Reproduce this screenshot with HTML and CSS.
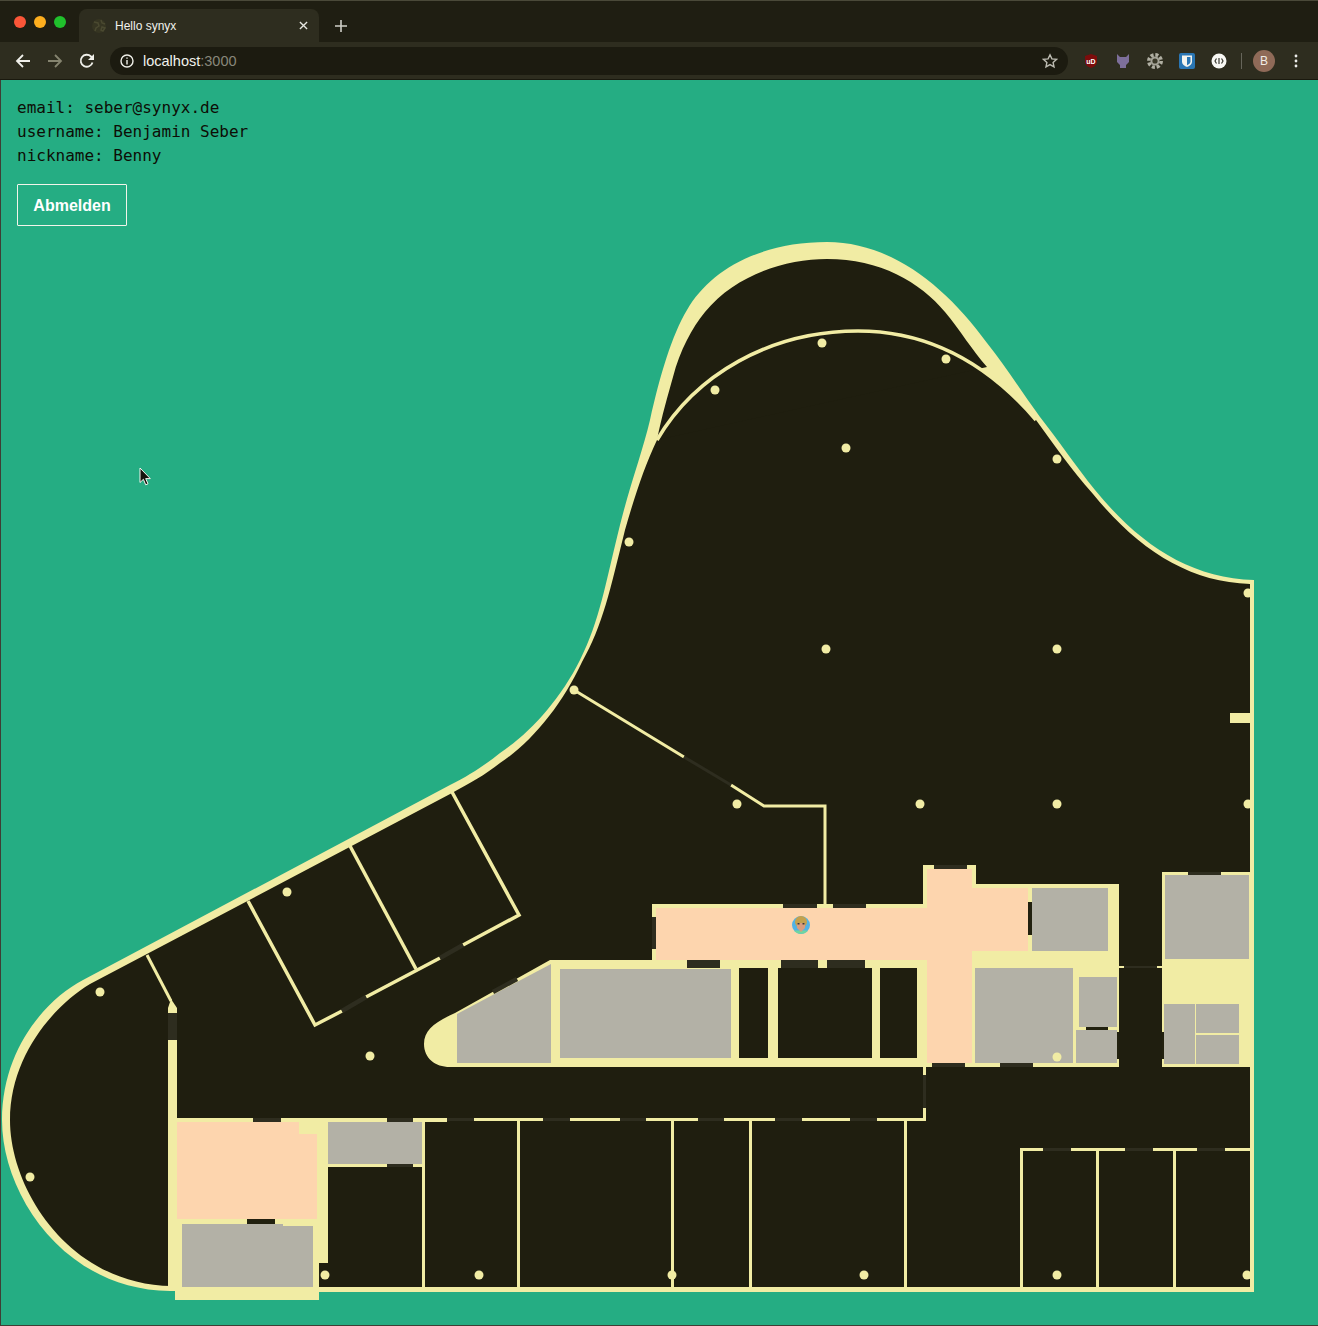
FILE: index.html
```html
<!DOCTYPE html>
<html lang="de">
<head>
<meta charset="utf-8">
<title>Hello synyx</title>
<link rel="stylesheet" href="styles.css">
</head>
<body>
<header class="chrome">
  <div class="tabstrip">
    <div class="lights"><span class="light red"></span><span class="light amber"></span><span class="light green"></span></div>
    <div class="tab">
      <svg class="favicon" viewBox="0 0 16 16"><circle cx="8" cy="8" r="7" class="fav-a"/><path d="M3 4l4 1 1 3-3 2-1 3M10 2l1 3 3 1M11 9l3 1-2 3-2-1z" class="fav-b"/></svg>
      <span class="tab-title">Hello synyx</span>
      <svg class="tab-x" viewBox="0 0 10 10"><path d="M1 1l8 8M9 1l-8 8"/></svg>
    </div>
    <svg class="tab-new" viewBox="0 0 12 12"><path d="M6 0v12M0 6h12"/></svg>
  </div>
  <div class="toolbar">
    <svg class="nav" viewBox="0 0 16 16"><path d="M15 8H2M8 2L2 8l6 6"/></svg>
    <svg class="nav dim" viewBox="0 0 16 16"><path d="M1 8h13M8 2l6 6-6 6"/></svg>
    <svg class="nav" viewBox="0 0 16 16"><path d="M13.500 9.500A6 6 0 1 1 12 3.500L14 5.500"/><path class="solid" d="M15 1v6H9z"/></svg>
    <div class="omnibox">
      <svg class="info" viewBox="0 0 14 14"><circle cx="7" cy="7" r="6"/><path d="M7 6v4.400M7 3.400v1.400"/></svg>
      <span class="host">localhost<span class="port">:3000</span></span>
      <svg class="star" viewBox="0 0 16 16"><path d="M8 1.800l1.900 4.100 4.500.5-3.300 3 .9 4.400L8 11.600l-4 2.200.9-4.400-3.300-3 4.500-.5z"/></svg>
    </div>
    <div class="extensions">
      <svg class="ext" viewBox="0 0 16 16"><path class="ub" d="M8 1l6 2v5c0 4-3 6-6 7-3-1-6-3-6-7V3z"/><text x="8" y="10.500" class="ub-t">uD</text></svg>
      <svg class="ext" viewBox="0 0 16 16"><path class="cat" d="M2 1l3 3h6l3-3v8l-3 3v3H5v-3L2 9z"/></svg>
      <svg class="ext" viewBox="0 0 16 16"><circle cx="8" cy="8" r="6.200" class="gear-o"/><circle cx="8" cy="8" r="3.600" class="gear-i"/></svg>
      <svg class="ext" viewBox="0 0 16 16"><rect width="16" height="16" rx="2" class="bw-bg"/><path class="bw" d="M3 2.500h10v6c0 3-2.500 4.500-5 5.500-2.500-1-5-2.500-5-5.500z"/><path class="bw-i" d="M8 4h3.500v4.500c0 1.700-1.700 2.800-3.500 3.700z"/></svg>
      <svg class="ext" viewBox="0 0 16 16"><circle cx="8" cy="8" r="7.500" class="wh"/><path class="wh-i" d="M5.500 5.500L4 8l1.500 2.500M10.500 5.500L12 8l-1.500 2.500M8 5v6"/></svg>
    </div>
    <span class="sep"></span>
    <span class="profile-pic">B</span>
    <svg class="menu" viewBox="0 0 4 14"><circle cx="2" cy="2" r="1.400"/><circle cx="2" cy="7" r="1.400"/><circle cx="2" cy="12" r="1.400"/></svg>
  </div>
</header>
<main class="page">
  <section class="profile">
    <p class="line">email: seber@synyx.de</p>
    <p class="line">username: Benjamin Seber</p>
    <p class="line">nickname: Benny</p>
    <button class="logout" type="button">Abmelden</button>
  </section>
  <svg class="plan" viewBox="0 242 1318 1084" width="1318" height="1084">
    <!-- silhouette -->
    <path class="wall" d="M1254 1292L1254 580C1190 578 1140 545 1095 490C1075 465 1058 440 1040 417C1020 390 1005 365 987 343C945 285 890 242 827 242C760 242 710 270 687 310C672 335 660 375 650 420C643 450 630 485 620 525C605 585 600 620 580 660C560 700 530 733 500 753C485 765 470 775 450 785L83 980C45 1000 2 1050 2 1120C2 1195 65 1290 170 1291L175 1291V1300H319V1292Z"/>
    <!-- interior -->
    <path class="dark" d="M1250 1287L1250 584C1188 582 1138 549 1093 494C1071 469 1054 445 1036 420C988 364 930 331 858 331C770 331 695 375 657 440C645 465 635 495 625 530C610 590 603 625 582 662C562 705 532 742 500 763C485 775 470 783 452 793L90 984C55 1005 10 1055 10 1120C10 1190 70 1285 172 1286L172 1287Z"/>
    <path class="dark" d="M657 440C662 415 668 395 673 377C680 350 692 328 705 312C735 275 785 259 827 259C880 259 920 282 945 312C960 330 972 350 987 367Z"/>
    <path class="line-thick" d="M657 440C695 375 770 331 858 331C930 331 988 364 1036 420"/>

    <!-- columns -->
    <g class="dots">
      <circle cx="822" cy="343" r="4.500"/><circle cx="946" cy="359" r="4.500"/><circle cx="715" cy="390" r="4.500"/>
      <circle cx="846" cy="448" r="4.500"/><circle cx="1057" cy="459" r="4.500"/><circle cx="629" cy="542" r="4.500"/>
      <circle cx="1248" cy="593" r="4.500"/><circle cx="826" cy="649" r="4.500"/><circle cx="1057" cy="649" r="4.500"/>
      <circle cx="574" cy="690" r="4.500"/><circle cx="737" cy="804" r="4.500"/><circle cx="920" cy="804" r="4.500"/>
      <circle cx="1057" cy="804" r="4.500"/><circle cx="1248" cy="804" r="4.500"/><circle cx="287" cy="892" r="4.500"/>
      <circle cx="100" cy="992" r="4.500"/><circle cx="370" cy="1056" r="4.500"/><circle cx="30" cy="1177" r="4.500"/>
      <circle cx="325" cy="1275" r="4.500"/><circle cx="479" cy="1275" r="4.500"/><circle cx="672" cy="1275" r="4.500"/>
      <circle cx="864" cy="1275" r="4.500"/><circle cx="1057" cy="1275" r="4.500"/><circle cx="1247" cy="1275" r="4.500"/>
    </g>

    <!-- thin partition from the facade -->
    <path class="line-thin" d="M574 690L684 757M731 785L764 806H825V905"/>
    <path class="door-line" d="M684 757L731 785"/>
    <rect class="wall" x="1230" y="713" width="21" height="10"/>

    <!-- tilted rooms -->
    <path class="line-thick" d="M452 792L519 915L463 945M440 958L366 997M342 1011L315 1025L248 901"/>
    <path class="line-thick" d="M350 846L416 969"/>
    <path class="door-line wide" d="M463 945L440 958M366 997L342 1011"/>

    <!-- left stair wall -->
    <path class="line-thin" d="M147 955L171 1001"/>
    <path class="wall" d="M168 1008L171 999L177 1008V1290H168Z"/>
    <rect class="door" x="168" y="1013" width="9" height="27"/>

    <!-- lower-left core -->
    <rect class="wall" x="177" y="1118" width="151" height="145"/>
    <rect class="wall" x="177" y="1263" width="142" height="27"/>
    <rect class="peach" x="177" y="1122" width="140" height="97"/>
    <rect class="wall" x="299" y="1122" width="18" height="12"/>
    <path class="gray" d="M182 1224H283V1226H313V1287H182Z"/>
    <rect class="wall" x="328" y="1118" width="119" height="4"/>
    <rect class="gray" x="328" y="1122" width="94" height="42"/>
    <rect class="wall" x="328" y="1164" width="96" height="3"/>
    <rect class="door" x="253" y="1118" width="28" height="4"/>
    <rect class="door" x="387" y="1118" width="26" height="4"/>
    <rect class="door" x="387" y="1164" width="26" height="3"/>
    <rect class="door-dark" x="247" y="1219" width="28" height="5"/>

    <!-- south row -->
    <g class="wall">
      <rect x="474" y="1118" width="69" height="3"/><rect x="570" y="1118" width="50" height="3"/>
      <rect x="646" y="1118" width="52" height="3"/><rect x="724" y="1118" width="51" height="3"/>
      <rect x="802" y="1118" width="48" height="3"/><rect x="877" y="1118" width="49" height="3"/>
      <rect x="422" y="1122" width="3" height="165"/><rect x="517" y="1120" width="3" height="167"/>
      <rect x="671" y="1120" width="3" height="167"/><rect x="749" y="1120" width="3" height="167"/>
      <rect x="904" y="1120" width="3" height="167"/>
      <rect x="923" y="1108" width="3" height="12"/><rect x="923" y="1066" width="3" height="9"/>
    </g>
    <g class="door">
      <rect x="447" y="1118" width="27" height="3"/><rect x="543" y="1118" width="27" height="3"/>
      <rect x="620" y="1118" width="26" height="3"/><rect x="698" y="1118" width="26" height="3"/>
      <rect x="775" y="1118" width="27" height="3"/><rect x="850" y="1118" width="27" height="3"/>
      <rect x="923" y="1075" width="3" height="33"/>
    </g>

    <!-- south-east rooms -->
    <g class="wall">
      <rect x="1020" y="1148" width="23" height="3"/><rect x="1071" y="1148" width="54" height="3"/>
      <rect x="1153" y="1148" width="44" height="3"/><rect x="1225" y="1148" width="25" height="3"/>
      <rect x="1020" y="1148" width="3" height="139"/><rect x="1096" y="1150" width="3" height="137"/>
      <rect x="1173" y="1150" width="3" height="137"/>
    </g>
    <g class="door">
      <rect x="1043" y="1148" width="28" height="3"/><rect x="1125" y="1148" width="28" height="3"/>
      <rect x="1197" y="1148" width="28" height="3"/>
    </g>

    <!-- central wing -->
    <path class="wall" d="M550 960L455 1013C435 1022 424 1030 424 1044C424 1058 435 1067 450 1067H927V960Z"/>
    <path class="gray" d="M457 1014L551 964V1063H457Z"/>
    <path class="door-line wide" d="M493 992L517 979"/>
    <rect class="gray" x="560" y="969" width="171" height="89"/>
    <rect class="dark" x="739" y="968" width="29" height="90"/>
    <rect class="dark" x="778" y="968" width="94" height="90"/>
    <rect class="dark" x="880" y="968" width="37" height="90"/>
    <rect class="door" x="687" y="960" width="33" height="8"/>
    <rect class="door" x="781" y="960" width="37" height="8"/>
    <rect class="door" x="827" y="960" width="38" height="8"/>

    <!-- corridor and tower -->
    <rect class="wall" x="652" y="904" width="275" height="56"/>
    <rect class="peach" x="656" y="908" width="271" height="52"/>
    <rect class="door" x="652" y="917" width="4" height="32"/>
    <rect class="door" x="783" y="904" width="34" height="4"/>
    <rect class="door" x="833" y="904" width="33" height="4"/>
    <rect class="wall" x="923" y="865" width="53" height="40"/>
    <rect class="wall" x="972" y="884" width="147" height="183"/>
    <rect class="peach" x="927" y="869" width="45" height="40"/>
    <rect class="peach" x="927" y="888" width="101" height="63"/>
    <rect class="peach" x="927" y="951" width="45" height="112"/>
    <rect class="wall" x="925" y="1063" width="47" height="4"/>
    <rect class="door" x="934" y="865" width="33" height="4"/>
    <rect class="door" x="932" y="1063" width="33" height="4"/>

    <!-- east rooms -->
    <rect class="gray" x="1032" y="888" width="76" height="63"/>
    <rect class="door-dark" x="1028" y="902" width="4" height="33"/>
    <rect class="gray" x="975" y="968" width="98" height="95"/>
    <rect class="gray" x="1079" y="977" width="38" height="50"/>
    <rect class="gray" x="1076" y="1030" width="41" height="33"/>
    <rect class="door-dark" x="1086" y="1027" width="22" height="3"/>
    <rect class="door-dark" x="1117" y="1032" width="2" height="27"/>
    <rect class="door" x="1000" y="1063" width="33" height="4"/>
    <circle class="wall" cx="1057" cy="1057" r="4.500"/>
    <rect class="wall" x="1119" y="966" width="5" height="2"/>
    <rect class="door" x="1124" y="966" width="33" height="2"/>
    <rect class="wall" x="1157" y="966" width="5" height="2"/>

    <!-- north-east block -->
    <rect class="wall" x="1162" y="872" width="88" height="195"/>
    <rect class="door" x="1188" y="872" width="33" height="3"/>
    <rect class="gray" x="1165" y="875" width="84" height="84"/>
    <rect class="gray" x="1164" y="1004" width="31" height="60"/>
    <rect class="gray" x="1196" y="1004" width="43" height="29"/>
    <rect class="gray" x="1196" y="1035" width="43" height="29"/>
    <rect class="door-dark" x="1162" y="1032" width="2" height="27"/>

    <!-- avatar -->
    <circle class="av-blue" cx="801" cy="925" r="9"/>
    <path class="av-green" d="M794 930.500A9 9 0 0 0 808 930.500Z"/>
    <circle class="av-hair" cx="801" cy="922" r="6"/>
    <path class="av-skin" d="M797 923H805V928L801 932L797 928Z"/>
    <rect class="av-eye" x="797.500" y="923" width="2" height="1.500"/>
    <rect class="av-eye" x="802.500" y="923" width="2" height="1.500"/>
  </svg>
</main>
<svg class="cursor" viewBox="0 0 12 19"><path d="M1 1v14.500l3.400-3.200 2.300 5.500 2.300-1-2.300-5.200h4.600z"/></svg>
</body>
</html>
```

FILE: styles.css
```css
* { box-sizing: border-box; }
html, body { margin: 0; padding: 0; }
body {
  position: relative;
  width: 1318px;
  height: 1326px;
  overflow: hidden;
  font-family: "Liberation Sans", Arial, sans-serif;
  background: #25ad83;
}

/* browser chrome */
.chrome { height: 80px; display: flex; flex-direction: column; border-top: 1px solid #4a4939; }
.tabstrip { height: 41px; background: #1f1e12; display: flex; align-items: flex-end; padding-left: 14px; }
.lights { display: flex; gap: 8px; align-self: flex-start; padding-top: 15px; width: 65px; }
.light { width: 12px; height: 12px; border-radius: 50%; }
.red { background: #fb5638; }
.amber { background: #fdae1e; }
.green { background: #20c02c; }
.tab {
  width: 240px; height: 33px; background: #2e2d1f; border-radius: 8px 8px 0 0;
  display: flex; align-items: center; padding: 0 11px 0 12px;
}
.favicon { width: 16px; height: 16px; margin-right: 8px; }
.fav-a { fill: #363522; }
.fav-b { fill: none; stroke: #4a4930; stroke-width: 1.500; }
.tab-title { flex: 1; color: #f1f1ec; font-size: 12px; }
.tab-x { width: 9px; height: 9px; fill: none; stroke: #e6e6e0; stroke-width: 1.500; }
.tab-new { width: 12px; height: 12px; margin: 0 0 10px 16px; fill: none; stroke: #cfcfc8; stroke-width: 1.600; }
.toolbar { height: 38px; background: #2e2d1f; display: flex; align-items: center; padding: 0 14px 0 15px; border-bottom: 1px solid #1a190e; }
.nav { width: 16px; height: 16px; margin-right: 16px; fill: none; stroke: #f0f0ea; stroke-width: 1.800; }
.nav.dim { stroke: #85846f; }
.nav .solid { fill: #f0f0ea; stroke: none; }
.omnibox {
  width: 958px; height: 28px; margin-left: -1px; background: #1c1b10; border-radius: 14px;
  display: flex; align-items: center; padding: 0 10px;
}
.info { width: 14px; height: 14px; fill: none; stroke: #efefe8; stroke-width: 1.400; margin-right: 9px; }
.host { flex: 1; color: #f1f1ec; font-size: 14.500px; }
.port { color: #88877a; }
.star { width: 16px; height: 16px; fill: none; stroke: #bdbcb2; stroke-width: 1.400; }
.extensions { display: flex; gap: 16px; margin-left: 15px; }
.ext { width: 16px; height: 16px; }
.ub { fill: #7c0c0c; }
.ub-t { fill: #fff; font-size: 7px; font-weight: 700; text-anchor: middle; font-family: "Liberation Sans", sans-serif; }
.cat { fill: #7d6f9a; }
.gear-o { fill: none; stroke: #b0afa2; stroke-width: 3.500; stroke-dasharray: 3 1.800; }
.gear-i { fill: #3a3928; stroke: #a5a498; stroke-width: 2; }
.bw-bg { fill: #2a76b4; }
.bw { fill: #f4f4ee; }
.bw-i { fill: #2a76b4; }
.wh { fill: #f8f8f4; }
.wh-i { fill: none; stroke: #3a3a32; stroke-width: 1.200; }
.sep { width: 1px; height: 16px; background: #66655a; margin-left: 14px; }
.profile-pic {
  width: 22px; height: 22px; border-radius: 50%; background: #8f6a58; color: #f1ece6;
  font-size: 12px; display: flex; align-items: center; justify-content: center; margin-left: 11px;
}
.menu { width: 4px; height: 14px; margin-left: 19px; fill: #ececea; }

/* page */
.page { background: #25ad83; box-shadow: inset 1px 0 #3f3e34, inset 0 -1px #3f3e34; height: 1246px; }
.profile { padding: 16px 17px; }
.line { margin: 0; font: 16px/24px "DejaVu Sans Mono", monospace; color: #0d0d06; }
.logout {
  display: block; width: 110px; height: 42px; margin-top: 16px; padding: 2px 0 0;
  border: 1px solid #f2f4ea; border-radius: 1px; background: transparent;
  color: #fff; font: 700 16px "Liberation Sans", Arial, sans-serif;
}

/* floor plan */
.plan { display: block; }
.wall, .dots { fill: #f1eca4; }
.dark { fill: #1f1e0f; }
.peach { fill: #fdd5ae; }
.gray { fill: #b3b1a6; }
.door { fill: #2e2d1f; }
.door-dark { fill: #22210f; }
.line-thick { fill: none; stroke: #f1eca4; stroke-width: 3.500; }
.line-thin { fill: none; stroke: #f1eca4; stroke-width: 3; }
.door-line { fill: none; stroke: #2e2d1f; stroke-width: 3; }
.door-line.wide { stroke-width: 4.500; }
.av-blue { fill: #52b2e4; }
.av-green { fill: #6fd6a0; }
.av-hair { fill: #c4a14c; }
.av-skin { fill: #d99c7c; }
.av-eye { fill: #3c3a34; }

.cursor { position: absolute; left: 139px; top: 467px; width: 12px; height: 19px; fill: #15140c; stroke: #f4f4ee; stroke-width: 1; }
```
